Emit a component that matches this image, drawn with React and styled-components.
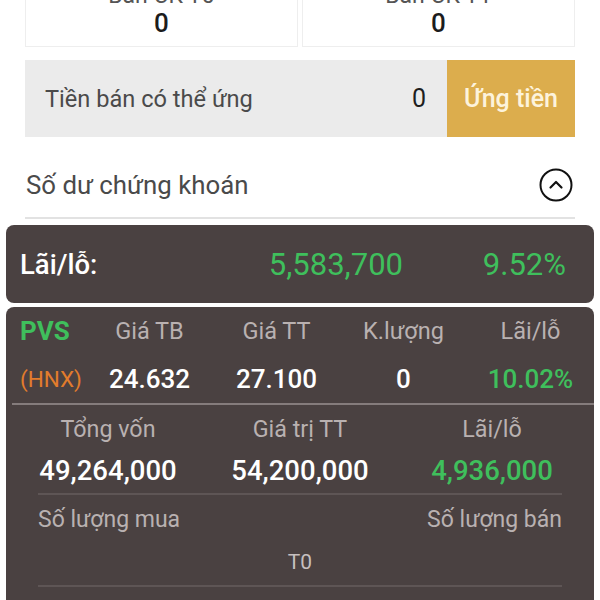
import styled, { createGlobalStyle } from 'styled-components'

const GlobalStyle = createGlobalStyle`
  html, body {
    margin: 0;
    padding: 0;
    background: #fff;
    font-family: Roboto, "Noto Sans", sans-serif;
  }
  #root {
    height: 600px;
    overflow: hidden;
  }
`

const ChevronCircle = () => (
    <svg width="34" height="34" viewBox="0 0 34 34" fill="none">
        <circle cx="17" cy="17" r="15.5" stroke="#111" strokeWidth="2" />
        <path d="M11.5 19.5 L17 14 L22.5 19.5" stroke="#111" strokeWidth="2.2" strokeLinecap="round" strokeLinejoin="round" />
    </svg>
)

const App = () => {
    return (
        <>
            <GlobalStyle />
            <Page>
                <TradeCells>
                    <TradeCell>
                        <CellLabel>Bán CK T0</CellLabel>
                        <CellValue>0</CellValue>
                    </TradeCell>
                    <TradeCell>
                        <CellLabel>Bán CK T1</CellLabel>
                        <CellValue>0</CellValue>
                    </TradeCell>
                </TradeCells>

                <AdvanceRow>
                    <AdvanceLabel>Tiền bán có thể ứng</AdvanceLabel>
                    <AdvanceValue>0</AdvanceValue>
                    <AdvanceButton>Ứng tiền</AdvanceButton>
                </AdvanceRow>

                <SectionHeader>
                    <SectionTitle>Số dư chứng khoán</SectionTitle>
                    <ChevronCircle />
                </SectionHeader>

                <TotalBox>
                    <TotalLabel>Lãi/lỗ:</TotalLabel>
                    <TotalValue>5,583,700</TotalValue>
                    <TotalPercent>9.52%</TotalPercent>
                </TotalBox>

                <StockBox>
                    <StockGrid>
                        <Ticker>PVS</Ticker>
                        <HeadCell>Giá TB</HeadCell>
                        <HeadCell>Giá TT</HeadCell>
                        <HeadCell>K.lượng</HeadCell>
                        <HeadCell>Lãi/lỗ</HeadCell>
                        <Exchange>(HNX)</Exchange>
                        <ValueCell>24.632</ValueCell>
                        <ValueCell>27.100</ValueCell>
                        <ValueCell>0</ValueCell>
                        <ValueCell $green>10.02%</ValueCell>
                    </StockGrid>
                    <SummaryGrid>
                        <SummaryLabel>Tổng vốn</SummaryLabel>
                        <SummaryLabel>Giá trị TT</SummaryLabel>
                        <SummaryLabel>Lãi/lỗ</SummaryLabel>
                        <SummaryValue>49,264,000</SummaryValue>
                        <SummaryValue>54,200,000</SummaryValue>
                        <SummaryValue $green>4,936,000</SummaryValue>
                    </SummaryGrid>
                    <QtyBlock>
                        <QtyRow>
                            <QtyLabel>Số lượng mua</QtyLabel>
                            <QtyLabel>Số lượng bán</QtyLabel>
                        </QtyRow>
                        <QtyTerm>T0</QtyTerm>
                    </QtyBlock>
                </StockBox>
            </Page>
        </>
    )
}

const Page = styled.div`
display: flex;
flex-direction: column;
padding: 0 6px;
`

const TradeCells = styled.div`
display: grid;
grid-template-columns: 1fr 1fr;
gap: 4px;
margin: -23px 19px 0;
`

const TradeCell = styled.div`
display: flex;
flex-direction: column;
align-items: center;
height: 69px;
border: 1px solid #eeeeee;
border-top: none;
`

const CellLabel = styled.div`
height: 30px;
line-height: 30px;
margin-top: 4px;
font-size: 23px;
color: #555;
`

const CellValue = styled.div`
font-size: 26px;
line-height: 24px;
font-weight: 500;
color: #1c1c1c;
`

const AdvanceRow = styled.div`
display: flex;
align-items: center;
height: 77px;
margin: 13px 19px 0;
background: #ebebeb;
`

const AdvanceLabel = styled.div`
flex: 1;
padding-left: 20px;
font-size: 23.6px;
color: #4a4a4a;
`

const AdvanceValue = styled.div`
padding-right: 21px;
font-size: 25px;
color: #1e1e1e;
`

const AdvanceButton = styled.div`
display: flex;
align-items: center;
justify-content: center;
width: 128px;
height: 100%;
background: #dcad4d;
color: #fdf3dc;
font-size: 25px;
font-weight: 500;
`

const SectionHeader = styled.div`
display: flex;
align-items: center;
justify-content: space-between;
height: 64px;
margin: 16px 19px 0;
padding: 0 2px 0 1px;
border-bottom: 2px solid #e2e2e2;
`

const SectionTitle = styled.div`
font-size: 25.8px;
color: #4a4a4a;
`

const TotalBox = styled.div`
display: grid;
grid-template-columns: 1fr auto 163px;
align-items: center;
height: 78px;
margin-top: 6px;
padding: 0 28px 0 14px;
border-radius: 8px;
background: #4a4141;
`

const TotalLabel = styled.div`
font-size: 27.5px;
font-weight: 500;
color: #fff;
`

const TotalValue = styled.div`
font-size: 31px;
color: #3fbf5c;
`

const TotalPercent = styled(TotalValue)`
text-align: right;
`

const StockBox = styled.div`
margin-top: 4px;
border-radius: 8px 8px 0 0;
background: #4a4141;
height: 320px;
`

const StockGrid = styled.div`
display: grid;
grid-template-columns: 66px repeat(4, 1fr);
grid-auto-rows: 48px;
align-items: center;
margin-left: 6px;
padding-left: 8px;
border-bottom: 2px solid #857c7c;
`

const Ticker = styled.div`
font-size: 26px;
font-weight: 700;
color: #3fbf5c;
`

const HeadCell = styled.div`
text-align: center;
font-size: 23.5px;
color: #b9b1b1;
`

const Exchange = styled.div`
font-size: 22.5px;
color: #e27c2c;
`

const ValueCell = styled.div`
text-align: center;
font-size: 26px;
font-weight: 500;
color: ${p => (p.$green ? '#3fbf5c' : '#fff')};
`

const SummaryGrid = styled.div`
display: grid;
grid-template-columns: repeat(3, 1fr);
grid-template-rows: 42px 40px;
align-items: center;
padding: 3px 6px 3px;
`

const SummaryLabel = styled.div`
text-align: center;
font-size: 23.3px;
color: #b9b1b1;
`

const SummaryValue = styled.div`
text-align: center;
font-size: 27.5px;
font-weight: 500;
color: ${p => (p.$green ? '#3fbf5c' : '#fff')};
`

const QtyBlock = styled.div`
margin: 0 32px;
border-top: 2px solid #5e5555;
border-bottom: 2px solid #5e5555;
padding-bottom: 4px;
`

const QtyRow = styled.div`
display: flex;
justify-content: space-between;
align-items: center;
height: 48px;
`

const QtyLabel = styled.div`
font-size: 23px;
color: #b9b1b1;
`

const QtyTerm = styled.div`
height: 38px;
line-height: 38px;
text-align: center;
font-size: 21px;
color: #c6bfbf;
`

export default App
